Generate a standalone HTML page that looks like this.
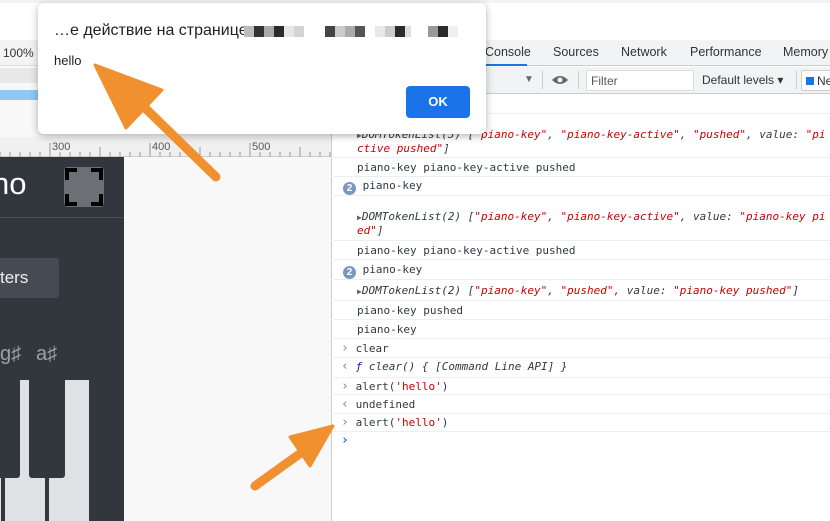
<!DOCTYPE html>
<html><head><meta charset="utf-8"><style>
*{margin:0;padding:0;box-sizing:border-box}
body{width:830px;height:521px;overflow:hidden;position:relative;background:#fff;font-family:"Liberation Sans",sans-serif}
.a{position:absolute}
.mono{font-family:"DejaVu Sans Mono","Liberation Mono",monospace;font-size:11px;color:#303942}
.row{position:absolute;left:331px;right:0;border-bottom:1px solid #eceef0}
.r{color:#c80000}
.i{font-style:italic}
.badge{display:inline-block;width:13px;height:13px;border-radius:7px;background:#7a97c4;color:#fff;font:bold 10px/13px "Liberation Sans",sans-serif;text-align:center;vertical-align:-2px}
.gt{color:#888;font-size:13px;display:inline-block;width:8px}
</style></head><body>
<div class="a" style="left:0;top:0;width:830px;height:3px;background:#f1f3f4"></div>
<!-- left pane -->
<div class="a" style="left:0;top:40px;width:331px;height:481px;background:#f8f8f8"></div>
<div class="a" style="left:0;top:40px;width:331px;height:26px;background:#f3f3f3;border-bottom:1px solid #ddd"></div>
<div class="a" style="left:3px;top:46px;font-size:12px;color:#333">100%</div>
<div class="a" style="left:0;top:68px;width:331px;height:15px;background:#e8e8e8"></div>
<div class="a" style="left:0;top:90px;width:38px;height:10px;background:#8dc8f6"></div>
<div class="a" style="left:0;top:137px;width:331px;height:20px;background:#f0f0f0;border-bottom:1px solid #ccc"></div>
<svg class="a" style="left:0;top:137px" width="331" height="20"><g stroke="#999" stroke-width="1">
<path d="M0 20V15M10 20V15M20 20V15M30 20V15M40 20V15M50 20V6M60 20V15M70 20V15M80 20V15M90 20V15M100 20V10M110 20V15M120 20V15M130 20V15M140 20V15M150 20V6M160 20V15M170 20V15M180 20V15M190 20V15M200 20V10M210 20V15M220 20V15M230 20V15M240 20V15M250 20V6M260 20V15M270 20V15M280 20V15M290 20V15M300 20V10M310 20V15M320 20V15M330 20V15"/></g>
<g font-size="11" fill="#555" font-family="Liberation Sans"><text x="52" y="13">300</text><text x="152" y="13">400</text><text x="252" y="13">500</text></g></svg>
<div class="a" style="left:0;top:157px;width:124px;height:364px;background:#32373e"></div>
<div class="a" style="left:-8px;top:166px;font-size:31px;color:#fff">no</div>
<div class="a" style="left:64px;top:167px;width:40px;height:40px;border-radius:4px;background:#6c7074"></div>
<svg class="a" style="left:64px;top:167px" width="40" height="40"><path d="M3 13V3H13M27 3H37V13M37 27V37H27M13 37H3V27" fill="none" stroke="#000" stroke-width="4"/></svg>
<div class="a" style="left:0;top:217px;width:124px;height:1px;background:#4a4f56"></div>
<div class="a" style="left:0;top:258px;width:59px;height:40px;background:#464b53;border-radius:0 3px 3px 0"></div>
<div class="a" style="left:0;top:268px;font-size:17px;color:#eee">ters</div>
<div class="a" style="left:0;top:343px;font-size:20px;color:#9aa0a6">g♯</div>
<div class="a" style="left:36px;top:343px;font-size:20px;color:#9aa0a6">a♯</div>
<div class="a" style="left:5px;top:380px;width:40px;height:141px;background:#dfe1e4"></div>
<div class="a" style="left:49px;top:380px;width:40px;height:141px;background:#dfe1e4"></div>
<div class="a" style="left:0;top:478px;width:1px;height:43px;background:#dfe1e4"></div>
<div class="a" style="left:0;top:378px;width:20px;height:100px;background:#32373e;border-radius:0 0 3px 3px"></div>
<div class="a" style="left:29px;top:378px;width:36px;height:100px;background:#32373e;border-radius:0 0 3px 3px"></div>
<!-- devtools -->
<div class="a" style="left:331px;top:40px;width:1px;height:481px;background:#ccc"></div>
<div class="a" style="left:332px;top:40px;width:498px;height:26px;background:#f1f3f4;border-bottom:1px solid #ccc;font-size:12px;color:#333"></div>
<div class="a" style="left:485px;top:45px;font-size:12.5px;color:#333">Console</div>
<div class="a" style="left:472px;top:64px;width:55px;height:2px;background:#1a73e8"></div>
<div class="a" style="left:553px;top:45px;font-size:12.5px;color:#333">Sources</div>
<div class="a" style="left:621px;top:45px;font-size:12.5px;color:#333">Network</div>
<div class="a" style="left:690px;top:45px;font-size:12.5px;color:#333">Performance</div>
<div class="a" style="left:783px;top:45px;font-size:12.5px;color:#333">Memory</div>
<div class="a" style="left:332px;top:67px;width:498px;height:27px;background:#f1f3f4;border-bottom:1px solid #ccc"></div>
<div class="a" style="left:524px;top:74px;font-size:10px;color:#666">▼</div>
<div class="a" style="left:542px;top:71px;width:1px;height:18px;background:#ccc"></div>
<svg class="a" style="left:551px;top:74px" width="18" height="12"><path d="M1 6Q9 -2 17 6Q9 14 1 6Z" fill="#666"/><circle cx="9" cy="6" r="2.5" fill="#f1f3f4"/></svg>
<div class="a" style="left:578px;top:71px;width:1px;height:18px;background:#ccc"></div>
<div class="a" style="left:586px;top:70px;width:108px;height:21px;background:#fff;border:1px solid #ddd;font-size:12px;color:#555;padding:3px 4px">Filter</div>
<div class="a" style="left:702px;top:73px;font-size:12px;color:#333">Default levels ▾</div>
<div class="a" style="left:796px;top:71px;width:1px;height:18px;background:#ccc"></div>
<div class="a" style="left:801px;top:70px;width:40px;height:21px;background:#fff;border:1px solid #ccc;border-radius:2px;font-size:12px;color:#333;padding:3px 4px"><span style="display:inline-block;width:8px;height:8px;background:#1a73e8;margin-right:3px"></span>Ne</div>
<div class="row" style="top:94px;height:20px"></div>
<div class="row mono" style="top:114px;height:44px"><div class="a" style="left:26px;top:14px;line-height:13px"><span style="color:#666;font-size:8px">▶</span><span class="i">DOMTokenList(3) [<span class="r">"piano-key"</span>, <span class="r">"piano-key-active"</span>, <span class="r">"pushed"</span>, value: <span class="r">"pi</span><br><span class="r">ctive pushed"</span>]</span></div></div>
<div class="row mono" style="top:158px;height:19px;padding:3px 0 0 26px">piano-key piano-key-active pushed</div>
<div class="row mono" style="top:177px;height:19px;padding:2px 0 0 12px"><span class="badge">2</span> piano-key</div>
<div class="row mono" style="top:196px;height:45px"><div class="a" style="left:26px;top:14px;line-height:13px"><span style="color:#666;font-size:8px">▶</span><span class="i">DOMTokenList(2) [<span class="r">"piano-key"</span>, <span class="r">"piano-key-active"</span>, value: <span class="r">"piano-key pi</span><br><span class="r">ed"</span>]</span></div></div>
<div class="row mono" style="top:241px;height:19px;padding:3px 0 0 26px">piano-key piano-key-active pushed</div>
<div class="row mono" style="top:260px;height:20px;padding:3px 0 0 12px"><span class="badge">2</span> piano-key</div>
<div class="row mono i" style="top:280px;height:21px;padding:4px 0 0 26px"><span style="color:#666;font-size:8px;font-style:normal">▶</span>DOMTokenList(2) [<span class="r">"piano-key"</span>, <span class="r">"pushed"</span>, value: <span class="r">"piano-key pushed"</span>]</div>
<div class="row mono" style="top:301px;height:19px;padding:3px 0 0 26px">piano-key pushed</div>
<div class="row mono" style="top:320px;height:19px;padding:3px 0 0 26px">piano-key</div>
<div class="row mono" style="top:339px;height:19px;padding:2px 0 0 10px"><span class="gt">›</span>&nbsp;clear</div>
<div class="row mono" style="top:358px;height:19px;padding:1px 0 0 10px;border-color:transparent"><span class="gt">‹</span>&nbsp;<span class="i"><span style="color:#1a1aa6">ƒ</span> clear() { [Command Line API] }</span></div>
<div class="row mono" style="top:377px;height:18px;padding:1px 0 0 10px;border-top:1px solid #eceef0"><span class="gt">›</span>&nbsp;alert(<span class="r">'hello'</span>)</div>
<div class="row mono" style="top:395px;height:19px;padding:2px 0 0 10px"><span class="gt">‹</span>&nbsp;undefined</div>
<div class="row mono" style="top:414px;height:18px;padding:1px 0 0 10px"><span class="gt">›</span>&nbsp;alert(<span class="r">'hello'</span>)</div>
<div class="a mono" style="left:341px;top:433px;color:#1a73e8;font-weight:bold;font-size:13px">›</div>
<!-- dialog -->
<div class="a" style="left:38px;top:3px;width:448px;height:131px;background:#fff;border-radius:6px;box-shadow:0 2px 8px rgba(0,0,0,.3)"></div>
<div class="a" style="left:54px;top:22px;font-size:16px;color:#202124">…е действие на странице</div>
<svg class="a" style="left:244px;top:26px" width="225" height="11"><g>
<rect x="0" width="10" height="11" fill="#bbb"/><rect x="10" width="10" height="11" fill="#333"/><rect x="20" width="10" height="11" fill="#aaa"/><rect x="30" width="10" height="11" fill="#2a2a2a"/><rect x="40" width="10" height="11" fill="#e6e6e6"/><rect x="50" width="10" height="11" fill="#d4d4d4"/>
<rect x="81" width="10" height="11" fill="#444"/><rect x="91" width="10" height="11" fill="#ccc"/><rect x="101" width="10" height="11" fill="#aaa"/><rect x="111" width="10" height="11" fill="#555"/>
<rect x="131" width="10" height="11" fill="#e9e9e9"/><rect x="141" width="10" height="11" fill="#ccc"/><rect x="151" width="10" height="11" fill="#2b2b2b"/><rect x="161" width="6" height="11" fill="#ddd"/>
<rect x="184" width="10" height="11" fill="#999"/><rect x="194" width="10" height="11" fill="#2b2b2b"/><rect x="204" width="10" height="11" fill="#f0f0f0"/></g></svg>
<div class="a" style="left:54px;top:53px;font-size:13px;color:#202124">hello</div>
<div class="a" style="left:406px;top:86px;width:64px;height:32px;background:#1a73e8;border-radius:4px;color:#fff;font-size:13px;font-weight:bold;text-align:center;line-height:32px">OK</div>
<!-- arrows -->
<svg class="a" style="left:0;top:0" width="830" height="521">
<g fill="#f0902f" stroke="#f0902f" stroke-linecap="round" stroke-linejoin="round">
<path d="M216 177L140 103" stroke-width="9" fill="none"/>
<path d="M95 65L162 90L126 128Z" stroke-width="3"/>
<path d="M255 486L305 450" stroke-width="9" fill="none"/>
<path d="M333 426L290 437L310 466Z" stroke-width="3"/>
</g></svg>
</body></html>
